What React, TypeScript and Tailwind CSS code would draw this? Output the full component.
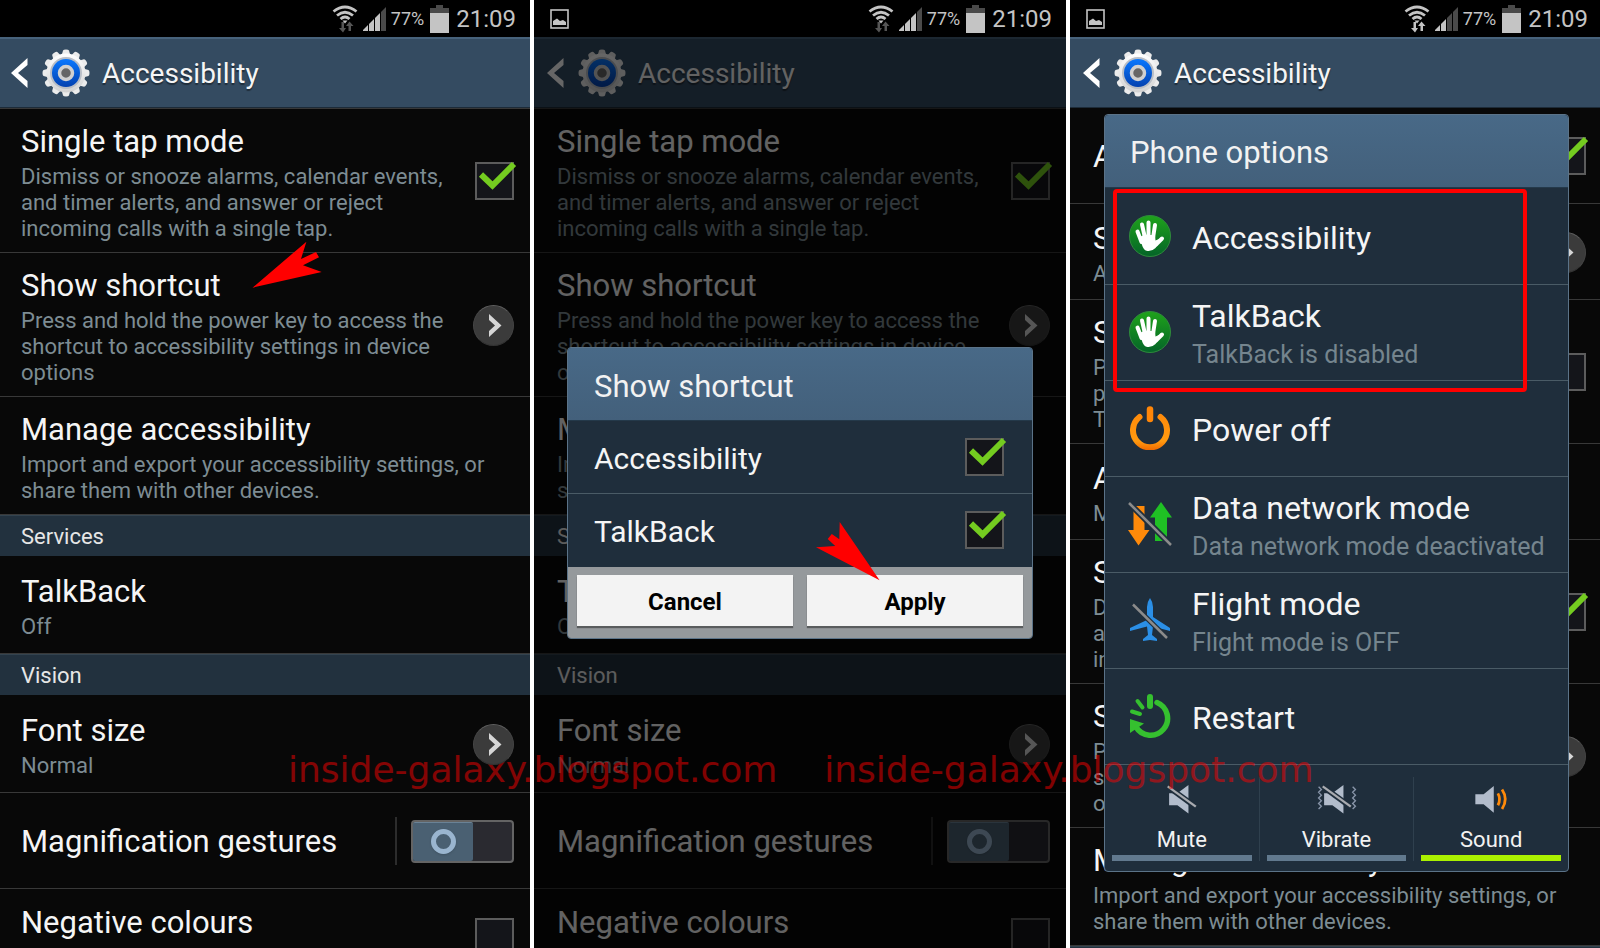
import type { ReactNode } from "react";

const TITLE = "text-[31px] leading-10 text-[#f5f5f5]";
const SUB = "text-[22px] leading-[26px] text-[#7d8c93]";

function StatusBar({ pad, shot, syncing, bars }: { pad: string; shot?: boolean; syncing?: boolean; bars: number }) {
    const arrow = syncing ? "#c4c4c4" : "#555";
    return (
        <div className={`flex h-[37px] items-center bg-black text-[#c4c4c4] ${pad}`}>
            {shot && (
                <svg width="19" height="20" viewBox="0 0 19 20" fill="none">
                    <rect x="1" y="1" width="17" height="18" stroke="#c4c4c4" strokeWidth="1.6" />
                    <path d="M3 16v-4l4-2.500 3 2.500 3-1 3 2v3z" fill="#c4c4c4" />
                </svg>
            )}
            <div className="ml-auto flex items-center">
                <svg width="26" height="28" viewBox="0 0 26 28" fill="none" stroke="#c4c4c4" strokeWidth="2.800">
                    <path d="M1.500 6.500Q13-2.500 24.500 6.500M5 10.500Q13 4 21 10.500M8.500 14Q13 10 17.500 14" />
                    <path d="M10.500 15.500h5L13 18.500z" fill="#c4c4c4" stroke="none" />
                    <path d="M9.500 17v6H7l4 4.500 3-4.500h-2v-6zM16.500 26v-5h-2.500l3.500-4.500 4 4.500h-2.500v5z" fill={arrow} stroke="none" />
                </svg>
                <svg className="ml-1" width="25" height="25" viewBox="0 0 25 25">
                    {[0, 1, 2, 3].map((i) => (
                        <path
                            key={i}
                            d={`M${i * 6 + 1} 25V${24 - i * 6}l5-5V25z`}
                            fill={i < bars ? "#c4c4c4" : "#4a4a4a"}
                        />
                    ))}
                </svg>
                <span className="ml-1 text-[18px] leading-6">77%</span>
                <svg className="ml-1.5" width="19" height="28" viewBox="0 0 19 28">
                    <path d="M6 0h7v3h6v6H0V3h6z" fill="#4a4a4a" />
                    <path d="M0 8h19v20H0z" fill="#c4c4c4" />
                </svg>
                <span className="ml-[7px] text-[24px] leading-8">21:09</span>
            </div>
        </div>
    );
}

function Gear() {
    const teeth = Array.from({ length: 12 }, (_, i) => i * 30);
    return (
        <svg width="48" height="48" viewBox="0 0 48 48">
            <defs>
                <linearGradient id="gearBlue" x1="0" y1="0" x2="0" y2="1">
                    <stop offset="0" stopColor="#0a78ff" />
                    <stop offset="1" stopColor="#0341b0" />
                </linearGradient>
                <linearGradient id="gearBody" x1="0" y1="0" x2="0" y2="1">
                    <stop offset="0" stopColor="#ffffff" />
                    <stop offset="1" stopColor="#d2d2d2" />
                </linearGradient>
            </defs>
            {teeth.map((a) => (
                <path key={a} d="M19 9L21 1.500Q21.500.5 24 .5T27 1.500L29 9z" fill="#ececec" transform={`rotate(${a} 24 24)`} />
            ))}
            <circle cx="24" cy="24" r="19.500" fill="url(#gearBody)" />
            <circle cx="24" cy="24" r="16" fill="#b9bec6" />
            <circle cx="24" cy="24" r="14" fill="url(#gearBlue)" />
            <circle cx="24" cy="24" r="6.500" fill="#666" stroke="#d0d0d0" strokeWidth="3.500" />
        </svg>
    );
}

function ActionBar({ pad }: { pad: string }) {
    return (
        <header className={`flex h-[71px] items-center border-t-2 border-b border-t-[#47627b] border-b-[#1d2b38] bg-[#344b61] ${pad}`}>
            <button aria-label="Back" className="mr-3.5">
                <svg width="17" height="30" viewBox="0 0 17 30">
                    <path d="M16.500 0v7L7 15l9.500 8v7L0 15z" fill="#fff" />
                </svg>
            </button>
            <Gear />
            <h1 className="ml-3 pt-0.5 text-[28px] leading-9 text-[#f5f5f5] [text-shadow:0_2px_1px_#0006]">Accessibility</h1>
        </header>
    );
}

function CheckBox({ checked, label }: { checked?: boolean; label: string }) {
    return (
        <span className="relative block h-[38px] w-[39px] shrink-0">
            <input
                type="checkbox"
                aria-label={label}
                defaultChecked={checked}
                className="peer block h-[38px] w-[39px] appearance-none border-2 border-[#5c5c5c] bg-[#14151a]"
            />
            <svg
                className="pointer-events-none absolute top-0 left-0 hidden overflow-visible peer-checked:block"
                width="39"
                height="38"
                viewBox="0 0 39 38"
            >
                <path d="M6 12.500L17.500 23.500L39 2" fill="none" stroke="#74cc20" strokeWidth="6" />
            </svg>
        </span>
    );
}

function More({ label }: { label: string }) {
    return (
        <button
            aria-label={label}
            className="relative z-10 flex size-[41px] shrink-0 items-center justify-center rounded-full border border-t-[#5e5e5e] border-x-[#444] border-b-[#333] bg-[#3b3b3b]"
        >
            <svg className="ml-0.5" width="14" height="23" viewBox="0 0 14 23">
                <path d="M1 0v6l6 5.500-6 5.500v6l12.500-11.500z" fill="#d6d6d6" />
            </svg>
        </button>
    );
}

function Toggle({ label }: { label: string }) {
    return (
        <span className="flex items-center">
            <span className="mr-3.5 h-12 w-0.5 bg-[#2c2c2c]" />
            <span className="relative block h-[43px] w-[103px]">
                <input
                    type="checkbox"
                    role="switch"
                    aria-label={label}
                    className="block h-[43px] w-[103px] appearance-none rounded border-2 border-[#646464] bg-[#2a2a30]"
                />
                <span className="pointer-events-none absolute top-0.5 left-0.5 flex h-[39px] w-[60px] items-center justify-center rounded-xs border-t border-[#6a8296] bg-[#4a6072]">
                    <span className="size-[25px] rounded-full border-5 border-[#9ab5cf] shadow" />
                </span>
            </span>
        </span>
    );
}

type RowProps = { pad: string; title: string; lines?: string[]; control?: ReactNode; tall?: boolean; cut?: boolean };

function Row({ pad, title, lines = [], control, tall, cut }: RowProps) {
    return (
        <li
            className={`flex items-center justify-between border-b border-[#383838] pt-[11px] pb-2.5 ${tall ? "min-h-[98px]" : "min-h-24"} ${pad}`}
        >
            <div className={cut ? "pb-7" : "pt-0.5"}>
                <h3 className={TITLE}>{title}</h3>
                {lines.length > 0 && (
                    <p className={`mt-0.5 whitespace-nowrap ${SUB}`}>
                        {lines.map((line) => (
                            <span key={line} className="block">{line}</span>
                        ))}
                    </p>
                )}
            </div>
            {control}
        </li>
    );
}

function Section({ pad, children }: { pad: string; children: ReactNode }) {
    return (
        <li className={`h-[41px] border-t border-[#33434f] bg-[#22313e] text-[22px] leading-[41px] text-[#e6e6e6] ${pad}`}>
            {children}
        </li>
    );
}

const singleTap = [
    "Dismiss or snooze alarms, calendar events,",
    "and timer alerts, and answer or reject",
    "incoming calls with a single tap.",
];
const shortcut = [
    "Press and hold the power key to access the",
    "shortcut to accessibility settings in device",
    "options",
];
const manage = ["Import and export your accessibility settings, or", "share them with other devices."];

function SettingsList({ pad }: { pad: string }) {
    return (
        <ul className="border-t border-[#383838]">
            <Row pad={pad} title="Single tap mode" lines={singleTap} control={<CheckBox checked label="Single tap mode" />} />
            <Row pad={pad} title="Show shortcut" lines={shortcut} control={<More label="Show shortcut" />} />
            <Row pad={pad} title="Manage accessibility" lines={manage} />
            <Section pad={pad}>Services</Section>
            <Row pad={pad} title="TalkBack" lines={["Off"]} tall />
            <Section pad={pad}>Vision</Section>
            <Row pad={pad} title="Font size" lines={["Normal"]} tall control={<More label="Font size" />} />
            <Row pad={pad} title="Magnification gestures" control={<Toggle label="Magnification gestures" />} />
            <Row pad={pad} title="Negative colours" cut control={<CheckBox label="Negative colours" />} />
        </ul>
    );
}

function ScrolledList({ pad }: { pad: string }) {
    const speak = ["Prompt screen reader to read out", "password information when", "TalkBack is on."];
    return (
        <ul>
            <Row pad={pad} title="Auto rotate screen" control={<CheckBox checked label="Auto rotate screen" />} />
            <Row pad={pad} title="Screen timeout" lines={["After 10 minutes of inactivity"]} control={<More label="Screen timeout" />} />
            <Row pad={pad} title="Speak passwords" lines={speak} control={<CheckBox label="Speak passwords" />} />
            <Row pad={pad} title="Answering/ending calls" lines={["Manage call settings"]} />
            <Row pad={pad} title="Single tap mode" lines={singleTap} control={<CheckBox checked label="Single tap mode" />} />
            <Row pad={pad} title="Show shortcut" lines={shortcut} control={<More label="Show shortcut" />} />
            <Row pad={pad} title="Manage accessibility" lines={manage} />
            <li className="h-10 border-t border-[#33434f] bg-[#22313e]" />
        </ul>
    );
}

function ShortcutDialog() {
    return (
        <div role="dialog" aria-label="Show shortcut" className="w-full overflow-hidden rounded border border-[#5b7388] bg-[#1f2e3c]">
            <h2 className="h-[73px] border-b border-[#24394a] bg-linear-to-b from-[#486987] to-[#43607b] pl-[26px] text-[31px] leading-[77px] text-[#f2f2f2]">
                Show shortcut
            </h2>
            {["Accessibility", "TalkBack"].map((name, i) => (
                <div
                    key={name}
                    className={`flex h-[73px] items-center justify-between border-[#4a5b66] pr-7 pl-[26px] ${i === 0 ? "border-b" : ""}`}
                >
                    <span className="pt-1 text-[30px] leading-10 text-[#f5f5f5]">{name}</span>
                    <CheckBox checked label={name} />
                </div>
            ))}
            <div className="flex h-[71px] items-start gap-3.5 bg-[#95999c] px-[9px] pt-2">
                {["Cancel", "Apply"].map((name) => (
                    <button key={name} className="h-[51px] flex-1 bg-[#f3f3f3] pt-1 text-[24px] font-bold text-black shadow-[0_2px_1px_#0006]">
                        {name}
                    </button>
                ))}
            </div>
        </div>
    );
}

function Hand() {
    return (
        <svg width="42" height="42" viewBox="0 0 42 42">
            <defs>
                <linearGradient id="handGreen" x1="0" y1="0" x2="0" y2="1">
                    <stop offset="0" stopColor="#1fa31b" />
                    <stop offset="1" stopColor="#046428" />
                </linearGradient>
            </defs>
            <circle cx="21" cy="21" r="20.500" fill="url(#handGreen)" stroke="#2f8a3c" />
            <g stroke="#fff" strokeWidth="4" strokeLinecap="round" fill="none">
                <path d="M8.500 16.500L12.500 27M13 9.500L16 23M19.500 7.500V23M26 10L24 23M33 23.500L27 29.500" />
            </g>
            <path d="M10.500 22L15 20H26L26.500 25.500L30 24Q30 29 26.500 33Q23 36.500 18.500 36Q14.500 35.500 13 30z" fill="#fff" />
        </svg>
    );
}

function Power() {
    return (
        <svg width="42" height="44" viewBox="0 0 42 44" fill="none" strokeLinecap="round">
            <defs>
                <linearGradient id="powerOrange" gradientUnits="userSpaceOnUse" x1="0" y1="0" x2="0" y2="44">
                    <stop offset="0" stopColor="#ff8608" />
                    <stop offset=".8" stopColor="#ff9a10" />
                    <stop offset="1" stopColor="#f06a00" />
                </linearGradient>
            </defs>
            <path d="M10.500 11A17 17 0 1 0 31.500 11" strokeWidth="6" stroke="url(#powerOrange)" />
            <path d="M21 3.500V13" strokeWidth="6.500" stroke="#ff8608" />
        </svg>
    );
}

function DataOff() {
    return (
        <svg width="44" height="44" viewBox="0 0 44 44">
            <path d="M5.500 4H16.500V28H21.500L10.500 43.500L0 28H5.500z" fill="#ff8a0a" />
            <path d="M33 0L44 15.500H39V39H27V15.500H22z" fill="#1fc024" />
            <path d="M1 1L43 43" stroke="#1f2e3c" strokeWidth="6" />
            <path d="M1 1L43 43" stroke="#8b8b8b" strokeWidth="2.500" />
        </svg>
    );
}

function FlightOff() {
    return (
        <svg width="42" height="44" viewBox="0 0 42 44">
            <path
                d="M21 0Q24 4 24 9V19L41 30V33L24 28.500L23 37L28 41V43L21 42L14 43V41L19 37L18 28.500L1 33V30L18 22V9Q18 4 21 0z"
                fill="#2b8fe6"
            />
            <path d="M4 6.500L38 40" stroke="#1f2e3c" strokeWidth="5" />
            <path d="M4 6.500L38 40" stroke="#8b8b8b" strokeWidth="2.500" />
        </svg>
    );
}

function Restart() {
    return (
        <svg width="42" height="44" viewBox="0 0 42 44" fill="none" stroke="#35c02f" strokeLinecap="round">
            <path d="M28 8.500A17 17 0 1 1 7 33" strokeWidth="5.500" />
            <path d="M21 3V12" strokeWidth="6" />
            <path d="M8.500 7L13.500 13.500M3 17.500L11 20" strokeWidth="4" />
            <path d="M1 25L15 29.500L1 39z" fill="#35c02f" stroke="none" />
        </svg>
    );
}

function Speaker({ mode }: { mode: string }) {
    const off = mode !== "Sound";
    return (
        <svg width="42" height="32" viewBox="0 0 42 32" fill="none">
            <path d={off ? "M7 9H16L28 0V31L16 22H7z" : "M4 10H13L24 1V30L13 21H4z"} fill="#b2bccb" />
            {off ? (
                <>
                    <path d="M6 2L36 24" stroke="#1f2e3c" strokeWidth="6" />
                    <path d="M5.500 1.500L36 23.500" stroke="#a9abb0" strokeWidth="2.500" />
                </>
            ) : (
                <path d="M28.500 9Q32 15.500 28.500 22M33 5Q40 15.500 33 26" stroke="#ff8a0a" strokeWidth="3" />
            )}
            {mode === "Vibrate" && (
                <path
                    d="M1 2l3 3-3 3 3 3-3 3 3 3-3 3 3 3-3 3M38 2l3 3-3 3 3 3-3 3 3 3-3 3 3 3-3 3"
                    stroke="#8794a8"
                    strokeWidth="1.500"
                />
            )}
        </svg>
    );
}

const options = [
    { title: "Accessibility", icon: <Hand /> },
    { title: "TalkBack", sub: "TalkBack is disabled", icon: <Hand /> },
    { title: "Power off", icon: <Power /> },
    { title: "Data network mode", sub: "Data network mode deactivated", icon: <DataOff /> },
    { title: "Flight mode", sub: "Flight mode is OFF", icon: <FlightOff /> },
    { title: "Restart", icon: <Restart /> },
];

function PhoneOptions() {
    return (
        <div role="dialog" aria-label="Phone options" className="relative w-full rounded border border-[#5b7388] bg-[#1f2e3c]">
            <h2 className="h-[73px] rounded-t border-b border-[#24394a] bg-linear-to-b from-[#486987] to-[#43607b] pl-[25px] text-[31px] leading-[76px] text-[#f2f2f2]">
                Phone options
            </h2>
            {options.map(({ title, sub, icon }, i) => (
                <button
                    key={title}
                    className={`flex w-full items-center border-b border-[#4a5b66] pl-[23px] text-left ${i === 0 ? "h-[97px]" : "h-24"}`}
                >
                    <span className="flex w-11 shrink-0 justify-center">{icon}</span>
                    <span className={`ml-5 whitespace-nowrap ${sub ? "pt-2" : "pt-1"}`}>
                        <span className="block text-[32px] leading-[38px] text-[#f5f5f5]">{title}</span>
                        {sub && <span className="block text-[25px] leading-10 text-[#75858e]">{sub}</span>}
                    </span>
                </button>
            ))}
            <div className="flex h-[106px] divide-x divide-[#2f404e] pt-3 pb-2.5">
                {["Mute", "Vibrate", "Sound"].map((mode) => (
                    <label key={mode} className="flex flex-1 flex-col items-center px-[7px] pt-2 text-[22px] text-[#f2f2f2]">
                        <input type="radio" name="sound-mode" defaultChecked={mode === "Sound"} className="peer sr-only" />
                        <Speaker mode={mode} />
                        <span className="mt-3 leading-7">{mode}</span>
                        <span className="mt-px h-1.5 w-full bg-[#61798e] peer-checked:bg-[#aaf000]" />
                    </label>
                ))}
            </div>
            <div className="pointer-events-none absolute top-[74px] right-[41px] left-2 h-[203px] rounded-sm border-4 border-[#ff0000]" />
        </div>
    );
}

export default function App() {
    return (
        <main className="relative grid h-screen min-h-[948px] grid-cols-[530fr_532fr_530fr] gap-1 overflow-hidden bg-white font-[Roboto,sans-serif]">
            <section className="min-w-0 overflow-hidden bg-[#080808]">
                <StatusBar pad="px-3.5" bars={3} />
                <ActionBar pad="pl-[11px]" />
                <SettingsList pad="pl-[21px] pr-4" />
            </section>

            <section className="relative isolate min-w-0 overflow-hidden bg-[#080808]">
                <StatusBar pad="pl-4 pr-3.5" shot bars={3} />
                <ActionBar pad="pl-[13px]" />
                <SettingsList pad="pl-[23px] pr-4" />
                <div className="absolute inset-x-0 top-[37px] bottom-0 z-20 flex items-center bg-black/60 px-[33px]">
                    <ShortcutDialog />
                </div>
            </section>

            <section className="relative isolate min-w-0 overflow-hidden bg-[#080808]">
                <StatusBar pad="pl-4 pr-3" shot syncing bars={2} />
                <ActionBar pad="pl-[13px]" />
                <ScrolledList pad="pl-[23px] pr-3.5" />
                <div className="absolute inset-x-0 top-[37px] bottom-0 z-20 flex items-center pr-[31px] pl-[34px]">
                    <PhoneOptions />
                </div>
            </section>

            <div className="pointer-events-none absolute top-[748px] left-[288px] flex gap-[47px] whitespace-nowrap font-['DejaVu_Sans',sans-serif] text-[36px] leading-[44px] text-[#ff0000]/50">
                <span>inside-galaxy.blogspot.com</span>
                <span>inside-galaxy.blogspot.com</span>
            </div>
            <svg className="pointer-events-none absolute top-[241px] left-[252px]" width="70" height="47" viewBox="252 241 70 47">
                <path d="M252.500 287.700L306.400 241.700L301 259L316 252L319 257.300L303 265.300L321.700 272z" fill="#f00" />
            </svg>
            <svg className="pointer-events-none absolute top-[521px] left-[816px]" width="65" height="60" viewBox="816 521 65 60">
                <path d="M879.600 580.300L839.700 522L839.300 539.300L831.800 534L827.700 539L835.200 546L816 547.300z" fill="#f00" />
            </svg>
        </main>
    );
}
